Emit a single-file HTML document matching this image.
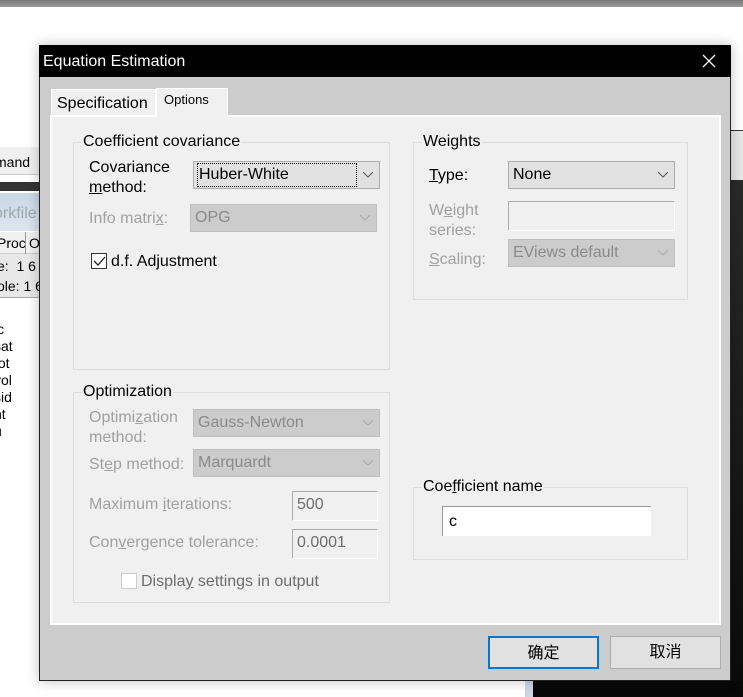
<!DOCTYPE html>
<html><head><meta charset="utf-8"><style>
*{box-sizing:border-box;margin:0;padding:0}
body{width:743px;height:697px;position:relative;overflow:hidden;background:#fff;font-family:"Liberation Sans","Noto Sans CJK SC",sans-serif;font-size:16px;color:#000}
.a{position:absolute}
.dis{color:#a0a0a0}
.grp{position:absolute;border:1px solid #dcdcdc}
.grp>.t{position:absolute;top:-11px;left:8px;background:#f0f0f0;padding:0 1px;font-size:16px;line-height:19px}
.cb{position:absolute;background:#e1e1e1;border:1px solid #adadad;line-height:26px;padding-left:4px;font-size:16px}
.cb.d{background:#cccccc;border-color:#bfbfbf;color:#8a8a8a}
.cb svg{position:absolute;right:6px;top:10px}
.tb{position:absolute;background:#f0f0f0;border:1px solid #adadad;border-right-color:#fff;border-bottom-color:#fff;line-height:26px;padding-left:4px;color:#6d6d6d}
.chk{position:absolute;width:16px;height:16px;background:#fff;border:1px solid #333}
.btn{position:absolute;background:#e1e1e1;border:1px solid #adadad;text-align:center;line-height:31px;font-size:16px}
</style></head><body>
<div class="a" style="left:0;top:0;width:743px;height:7px;background:linear-gradient(#7a7a7a,#9a9a9a)"></div>
<div class="a" style="left:0;top:147px;width:40px;height:28px;background:#f0f0f0;border-bottom:1px solid #ccc"></div>
<div class="a" style="left:-5px;top:154px;font-size:14px">mand</div>
<div class="a" style="left:0;top:182px;width:40px;height:9px;background:#333"></div>
<div class="a" style="left:0;top:193px;width:40px;height:38px;background:linear-gradient(#c9d7e6,#dde6f0)"></div>
<div class="a" style="left:-6px;top:205px;font-size:16px;color:#9aa">orkfile</div>
<div class="a" style="left:0;top:232px;width:40px;height:22px;background:#f0f0f0;border-bottom:1px solid #ccc"></div>
<div class="a" style="left:-3px;top:235px;font-size:14px">Proc</div>
<div class="a" style="left:25px;top:232px;width:1px;height:22px;background:#999"></div>
<div class="a" style="left:29px;top:235px;font-size:14px">O</div>
<div class="a" style="left:0;top:254px;width:40px;height:44px;background:#e8e8e8;border-bottom:1px solid #aaa"></div>
<div class="a" style="left:-3px;top:258px;font-size:14px">e:&nbsp; 1 6</div>
<div class="a" style="left:-3px;top:278px;font-size:14px">ole: 1 6</div>
<div class="a" style="left:-6px;top:321px;font-size:14px;line-height:17px">ic<br>sat<br>tot<br>vol<br>sid<br>nt<br>u<br>t<br>l</div>
<div class="a" style="left:731px;top:130px;width:12px;height:50px;background:#e8e8e8;border-top:1px solid #333"></div>
<div class="a" style="left:731px;top:180px;width:12px;height:517px;background:linear-gradient(#2a2a2a,#0a0a0a)"></div>
<div class="a" style="left:525px;top:681px;width:8px;height:16px;background:#ccd6e4"></div>
<div class="a" style="left:533px;top:681px;width:210px;height:16px;background:#080808"></div>
<div class="a" style="left:39px;top:45px;width:692px;height:636px;background:#cccccc;border:1px solid #222;box-shadow:0 0 12px rgba(0,0,0,.25)"></div>
<div class="a" style="left:39px;top:45px;width:692px;height:32px;background:#000;color:#fff;font-size:16px;line-height:33px;padding-left:4px">Equation Estimation</div>
<svg class="a" style="left:702px;top:54px" width="14" height="14"><path d="M1 1L13 13M13 1L1 13" stroke="#fff" stroke-width="1.3"/></svg>
<div class="a" style="left:51px;top:89px;width:105px;height:27px;background:#f0f0f0;border:1px solid #fff;border-bottom:none;font-size:16px;line-height:27px;padding-left:5px">Specification</div>
<div class="a" style="left:156px;top:88px;width:72px;height:29px;background:#f0f0f0;border:1px solid #fff;border-bottom:none;font-size:13px;line-height:22px;padding-left:7px">Options</div>
<div class="a" style="left:50px;top:115px;width:671px;height:510px;background:#f0f0f0;border:2px solid #fff"></div>
<div class="a" style="left:157px;top:115px;width:70px;height:3px;background:#f0f0f0"></div>
<div class="grp" style="left:73px;top:142px;width:317px;height:228px"><div class="t">Coefficient covariance</div></div>
<div class="a" style="left:89px;top:158px;line-height:20px">Covariance<br><u>m</u>ethod:</div>
<div class="cb" style="left:193px;top:161px;width:187px;height:28px"><span style="display:inline-block;outline:1px dotted #000;width:158px;line-height:22px;padding-left:1px;margin-top:1px">Huber-White</span><svg width="10" height="6"><path d="M0 0L5 5L10 0" fill="none" stroke="#555"/></svg></div>
<div class="a dis" style="left:89px;top:210px">Info matri<u>x</u>:</div>
<div class="cb d" style="left:190px;top:204px;width:187px;height:28px">OPG<svg width="10" height="6"><path d="M0 0L5 5L10 0" fill="none" stroke="#aaa"/></svg></div>
<div class="chk" style="left:91px;top:253px"><svg width="14" height="14" style="position:absolute;left:0;top:0"><path d="M2 7L6 11L13 3" fill="none" stroke="#222" stroke-width="1.3"/></svg></div>
<div class="a" style="left:111px;top:253px">d.f. Adjustment</div>
<div class="grp" style="left:413px;top:142px;width:275px;height:158px"><div class="t">Weights</div></div>
<div class="a" style="left:429px;top:167px"><u>T</u>ype:</div>
<div class="cb" style="left:508px;top:161px;width:167px;height:28px">None<svg width="10" height="6"><path d="M0 0L5 5L10 0" fill="none" stroke="#555"/></svg></div>
<div class="a dis" style="left:429px;top:201px;line-height:20px">W<u>e</u>ight<br>series:</div>
<div class="a" style="left:508px;top:201px;width:167px;height:30px;border:1px solid #adadad;border-right-color:#fff;border-bottom-color:#fff;background:#f0f0f0"></div>
<div class="a dis" style="left:429px;top:251px"><u>S</u>caling:</div>
<div class="cb d" style="left:508px;top:239px;width:167px;height:28px">EViews default<svg width="10" height="6"><path d="M0 0L5 5L10 0" fill="none" stroke="#aaa"/></svg></div>
<div class="grp" style="left:73px;top:392px;width:317px;height:211px"><div class="t">Optimization</div></div>
<div class="a dis" style="left:89px;top:408px;line-height:20px">Optimi<u>z</u>ation<br>method:</div>
<div class="cb d" style="left:193px;top:409px;width:187px;height:28px">Gauss-Newton<svg width="10" height="6"><path d="M0 0L5 5L10 0" fill="none" stroke="#aaa"/></svg></div>
<div class="a dis" style="left:89px;top:456px">St<u>e</u>p method:</div>
<div class="cb d" style="left:193px;top:449px;width:187px;height:28px">Marquardt<svg width="10" height="6"><path d="M0 0L5 5L10 0" fill="none" stroke="#aaa"/></svg></div>
<div class="a dis" style="left:89px;top:496px">Maximum <u>i</u>terations:</div>
<div class="tb" style="left:292px;top:491px;width:86px;height:30px">500</div>
<div class="a dis" style="left:89px;top:534px">Con<u>v</u>ergence tolerance:</div>
<div class="tb" style="left:292px;top:529px;width:86px;height:30px">0.0001</div>
<div class="chk" style="left:121px;top:573px;border-color:#ccc"></div>
<div class="a" style="left:141px;top:573px;color:#6d6d6d">Displa<u>y</u> settings in output</div>
<div class="grp" style="left:413px;top:487px;width:275px;height:73px"><div class="t">Coe<u>f</u>ficient name</div></div>
<div class="a" style="left:442px;top:506px;width:209px;height:30px;background:#fff;border-top:1px solid #999;border-left:1px solid #999;line-height:29px;padding-left:6px">c</div>
<div class="btn" style="left:488px;top:636px;width:111px;height:33px;border:2px solid #0078d7">确定</div>
<div class="btn" style="left:610px;top:636px;width:111px;height:33px">取消</div>
</body></html>
